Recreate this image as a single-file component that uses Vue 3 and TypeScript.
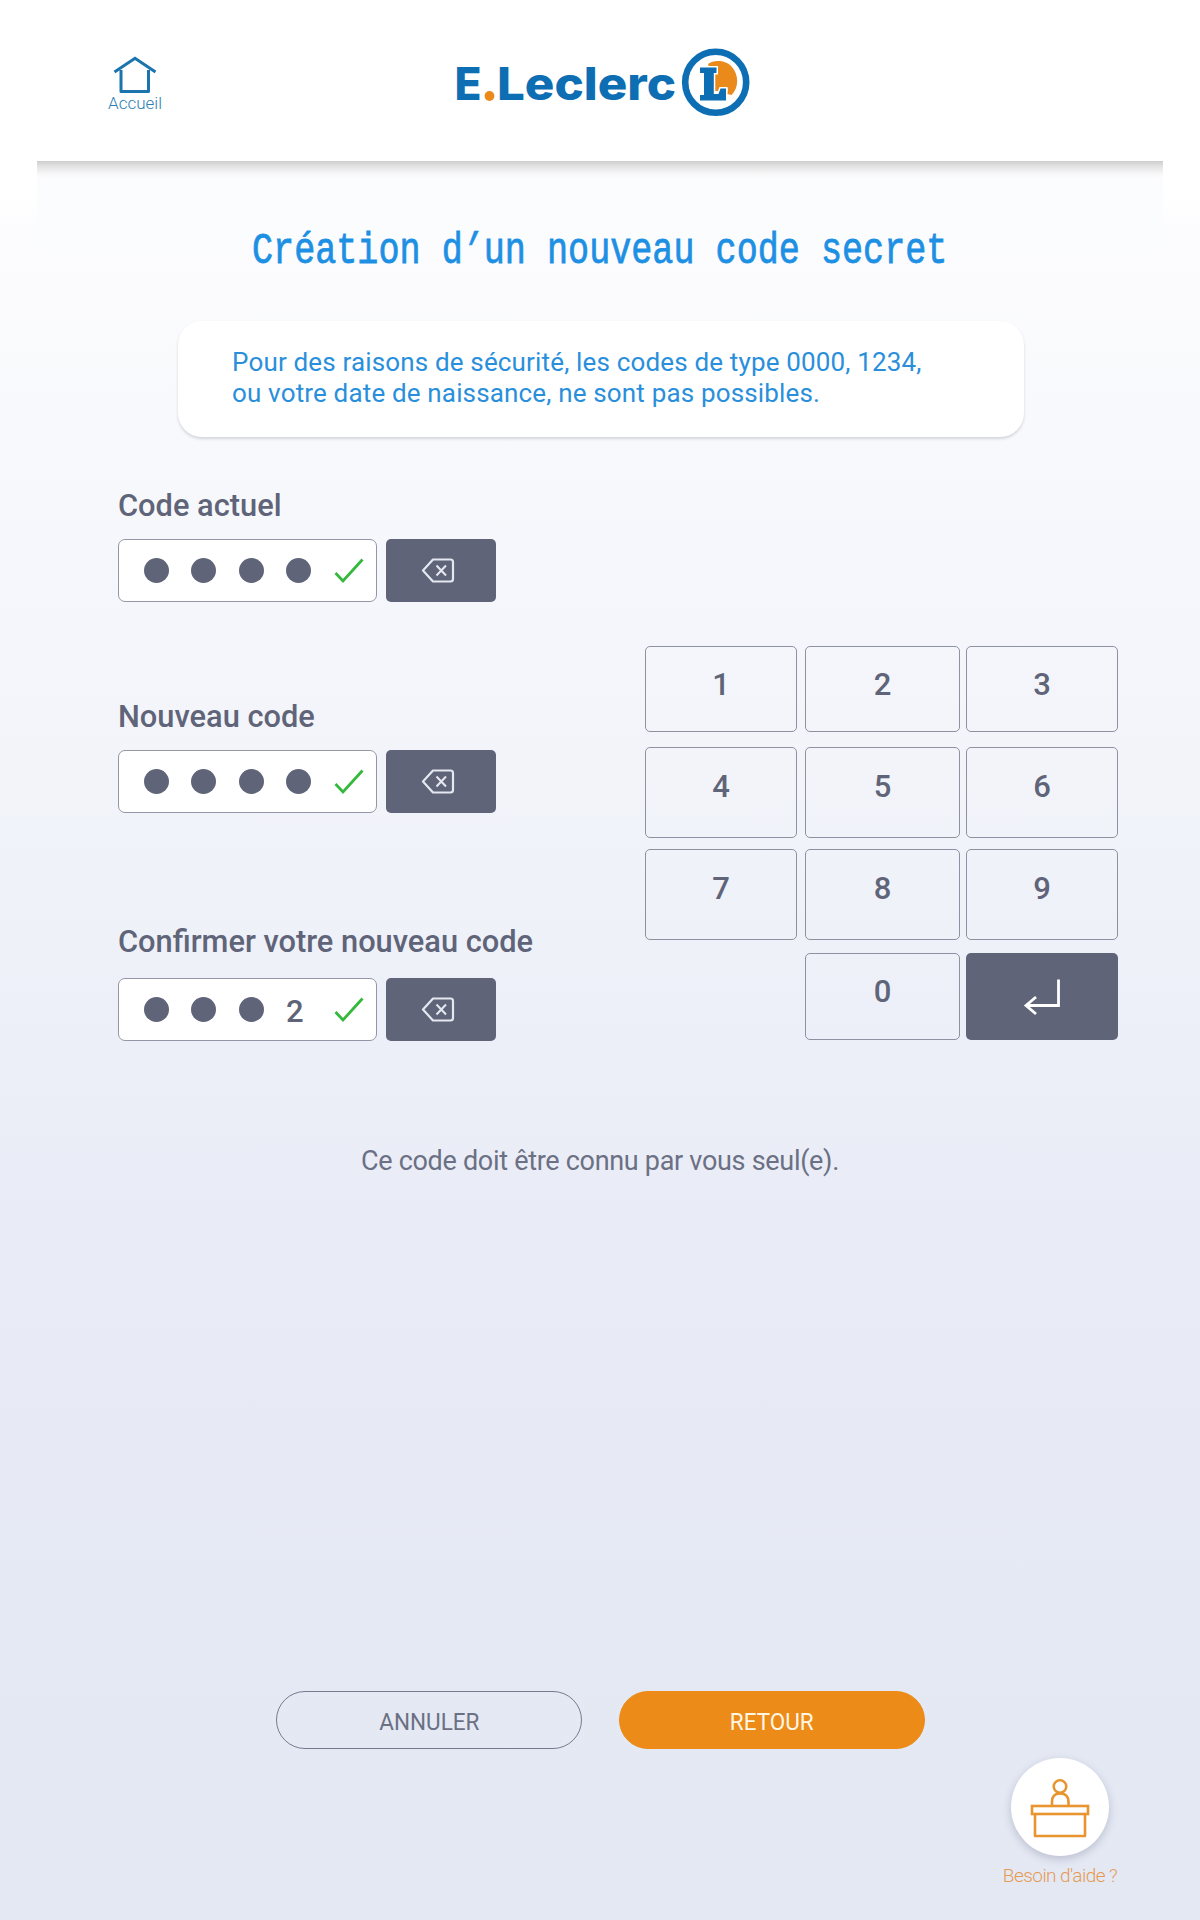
<script setup lang="ts">
interface CodeField {
  id: string
  label: string
  masked: number
  visible: string
}

const fields: CodeField[] = [
  { id: 'current', label: 'Code actuel', masked: 4, visible: '' },
  { id: 'new', label: 'Nouveau code', masked: 4, visible: '' },
  { id: 'confirm', label: 'Confirmer votre nouveau code', masked: 3, visible: '2' },
]

const keys: string[] = ['1', '2', '3', '4', '5', '6', '7', '8', '9', '', '0']
</script>

<template>
  <div class="screen">
    <header class="header">
      <a class="home">
        <svg width="44" height="38" viewBox="0 0 44 38" fill="none" stroke="#1c74ae" stroke-width="3">
          <path d="M8 14V35.500H35.500V14" stroke-linejoin="round" />
          <path d="M1.500 16L22 2.200L42.500 16" />
        </svg>
        <span>Accueil</span>
      </a>
      <svg class="logo" width="300" height="80" viewBox="0 0 300 80">
        <g class="wordmark" fill="#0d6eb3">
          <text x="4.500" y="58.300" textLength="27" lengthAdjust="spacingAndGlyphs">E</text>
          <text x="47" y="58.300" textLength="179" lengthAdjust="spacingAndGlyphs">Leclerc</text>
        </g>
        <circle cx="39.500" cy="54" r="4.900" fill="#ea8a1a" />
        <circle cx="265.700" cy="40.300" r="30.500" fill="#fff" stroke="#0d6eb3" stroke-width="6.600" />
        <path d="M258 22C264 17.500 276 18 282 25C289 33 289 46 281.500 53L277 52L278 46L272 49H265V27L259 25Z" fill="#ea8a1a" />
        <path d="M250 25.500H266.500V31H263.800V52H268.500L270.500 46.500H276V58.500H250V53H254V31H250Z" fill="#0d6eb3" stroke="#fff" stroke-width="3" paint-order="stroke" />
      </svg>
    </header>

    <main class="panel">
      <h1 class="title"><span>Création d<i class="apostrophe">'</i>un nouveau code secret</span></h1>

      <p class="notice">
        Pour des raisons de sécurité, les codes de type 0000, 1234,<br />
        ou votre date de naissance, ne sont pas possibles.
      </p>

      <section class="entry">
        <div class="fields">
          <div v-for="f in fields" :key="f.id" class="field" :class="f.id">
            <label>{{ f.label }}</label>
            <div class="row">
              <div class="input">
                <i v-for="n in f.masked" :key="n" class="dot"></i>
                <span v-if="f.visible" class="digit">{{ f.visible }}</span>
                <svg class="check" width="30" height="26" viewBox="0 0 30 26" fill="none" stroke="#35b93c" stroke-width="2.800">
                  <path d="M1.500 15L9 23L28.500 1.500" />
                </svg>
              </div>
              <button class="erase" type="button">
                <svg width="34" height="25" viewBox="0 0 34 25" fill="none" stroke="#e6e8f0" stroke-width="2.200" stroke-linejoin="round">
                  <path d="M12 1.500H29.500Q32 1.500 32 4V21Q32 23.500 29.500 23.500H12L2 12.500Z" />
                  <path d="M15.500 7.500L25 17.500M25 7.500L15.500 17.500" stroke-width="2" />
                </svg>
              </button>
            </div>
          </div>
        </div>

        <div class="keypad">
          <template v-for="k in keys" :key="k">
            <button v-if="k" class="key" type="button">{{ k }}</button>
            <span v-else></span>
          </template>
          <button class="key enter" type="button">
            <svg width="38" height="38" viewBox="0 0 38 38" fill="none" stroke="#fff" stroke-width="2.800">
              <path d="M35.500 1.500V27.500H3" />
              <path d="M13 19L3 27.500L13 36" />
            </svg>
          </button>
        </div>
      </section>

      <p class="hint">Ce code doit être connu par vous seul(e).</p>

      <div class="actions">
        <button class="pill" type="button"><span>ANNULER</span></button>
        <button class="pill primary" type="button"><span>RETOUR</span></button>
      </div>

      <a class="help">
        <span class="bubble">
          <svg width="60" height="60" viewBox="0 0 60 60" fill="none" stroke="#e8952f" stroke-width="2.600">
            <circle cx="30" cy="8.500" r="6.300" />
            <path d="M22 28V24Q22 15.500 30 15.500Q38.500 15.500 38.500 24V28" />
            <rect x="2" y="28" width="56" height="8" />
            <path d="M5 36V58H55V36" stroke-linejoin="round" />
          </svg>
        </span>
        <span class="help-label">Besoin d'aide ?</span>
      </a>
    </main>
  </div>
</template>

<style>
body {
  margin: 0;
}
</style>

<style scoped>
.screen {
  width: 1200px;
  height: 1920px;
  overflow: hidden;
  font-family: Roboto, 'Liberation Sans', sans-serif;
  color: #5f6479;
  background: linear-gradient(180deg, #fff 0, #fff 190px, #fcfcfe 235px, #f7f8fc 500px, #f2f4fa 780px, #edf0f8 1000px, #e9ecf6 1230px, #e5e9f4 1600px, #e4e8f3 1920px);
}
.header {
  position: relative;
  z-index: 1;
  height: 161px;
  display: flex;
  align-items: flex-start;
  background: #fff;
}
.home {
  width: 60px;
  margin: 56px 0 0 105px;
  display: flex;
  flex-direction: column;
  align-items: center;
  color: #2f7fb4;
  font-size: 17px;
  font-weight: 300;
  line-height: 20px;
}
.home span {
  margin-top: -1px;
  white-space: nowrap;
}
.logo {
  margin: 42px 0 0 285px;
}
.wordmark {
  font-family: Inter, sans-serif;
  font-size: 45px;
  font-weight: 800;
}
.panel {
  width: 1126px;
  height: 1759px;
  margin: 0 auto;
  display: flex;
  flex-direction: column;
  background:
    linear-gradient(180deg, rgba(0, 0, 0, .19) 0, rgba(0, 0, 0, .1) 5px, rgba(0, 0, 0, .02) 13px, transparent 18px) no-repeat 0 0 / 100% 18px,
    linear-gradient(180deg, #fcfcfd 0, #fbfcfe 60px, rgba(251, 252, 254, 0) 140px);
}
.title {
  margin: 60px 0 0;
  height: 60px;
  text-align: center;
  color: #1e90e4;
  font: 400 44px/61px 'Liberation Mono', monospace;
  white-space: nowrap;
}
.title span {
  display: inline-block;
  transform: scaleX(.798);
  margin: 0 -200px;
  -webkit-text-stroke: .8px #1e90e4;
}
.apostrophe {
  display: inline-block;
  font-style: normal;
  transform: translateX(-7px) skewX(-28deg);
}
.notice {
  box-sizing: border-box;
  width: 846px;
  height: 116px;
  margin: 40px 0 0 140.500px;
  padding: 26px 0 0 54.500px;
  border-radius: 24px;
  background: #fff;
  box-shadow: 0 2px 3px rgba(70, 75, 95, .2);
  color: #2a8fdb;
  font-size: 26px;
  letter-spacing: .16px;
  line-height: 31px;
  white-space: nowrap;
}
.entry {
  display: flex;
  height: 604px;
}
.fields {
  width: 527px;
  padding-left: 81px;
}
.field label {
  display: block;
  font-size: 30.800px;
  font-weight: 500;
  line-height: 37px;
  white-space: nowrap;
}
.field.current {
  padding-top: 50px;
}
.field.new {
  padding-top: 96px;
}
.field.confirm {
  padding-top: 110px;
}
.row {
  display: flex;
  gap: 9px;
  margin-top: 15px;
}
.field.confirm .row {
  margin-top: 18px;
}
.input {
  box-sizing: border-box;
  width: 258.500px;
  height: 63px;
  padding: 0 12px 0 24.500px;
  display: flex;
  align-items: center;
  border: 1.5px solid #9296a6;
  border-radius: 7px;
  background: #fff;
}
.dot {
  flex: none;
  width: 25px;
  height: 25px;
  margin-right: 22.500px;
  border-radius: 50%;
  background: #5f6479;
}
.digit {
  padding-top: 3px;
  font-size: 31px;
  font-weight: 500;
}
.check {
  margin-left: auto;
}
.erase {
  width: 110px;
  height: 63px;
  padding: 0 6px 0 0;
  display: flex;
  align-items: center;
  justify-content: center;
  border: 0;
  border-radius: 5px;
  background: #5f6479;
}
.keypad {
  display: grid;
  align-content: start;
  padding-top: 209px;
  grid-template-columns: 154px 155px 152px;
  grid-template-rows: 90px 91px 93px 87px;
  column-gap: 6px;
  row-gap: 11px;
}
.key {
  box-sizing: border-box;
  padding: 0 0 12px;
  border: 1.5px solid #8d92a3;
  border-radius: 5px;
  background: transparent;
  color: #5f6479;
  font: 500 31px/36px Roboto, sans-serif;
}
.key:nth-child(-n + 3) {
  height: 86px;
  padding-bottom: 8px;
}
.key:nth-child(n + 7):nth-child(-n + 9) {
  height: 91px;
}
.key:nth-child(11) {
  padding-bottom: 9px;
}
.key:nth-child(3n + 1) {
  width: 152px;
}
.key.enter {
  padding: 0;
  display: flex;
  align-items: center;
  justify-content: center;
  border: 0;
  background: #5f6479;
}
.hint {
  margin: 102px 0 0;
  text-align: center;
  font-size: 27px;
  letter-spacing: -.3px;
  line-height: 36px;
  color: #6b7084;
}
.actions {
  display: flex;
  gap: 37px;
  margin: 512px 0 0 239px;
}
.pill {
  box-sizing: border-box;
  width: 306px;
  height: 58px;
  padding: 4px 0 0;
  border: 1.5px solid #757a8f;
  border-radius: 29px;
  background: transparent;
  color: #6b7084;
  font: 400 24px/28px Roboto, sans-serif;
}
.pill span {
  display: inline-block;
  transform: scaleX(.937);
}
.pill.primary {
  border-color: #ec8b18;
  background: #ec8b18;
  color: #fff6e4;
}
.help {
  width: 140px;
  margin: 9px 0 0 953px;
  display: flex;
  flex-direction: column;
  align-items: center;
  color: #e59a54;
  font-size: 19px;
  font-weight: 300;
  letter-spacing: -.55px;
  line-height: 24px;
}
.bubble {
  box-sizing: border-box;
  width: 98px;
  height: 98px;
  padding-top: 2px;
  display: flex;
  align-items: center;
  justify-content: center;
  border-radius: 50%;
  background: #fff;
  box-shadow: 0 3px 8px rgba(80, 85, 115, .28);
}
.help-label {
  margin-top: 8px;
}
</style>
